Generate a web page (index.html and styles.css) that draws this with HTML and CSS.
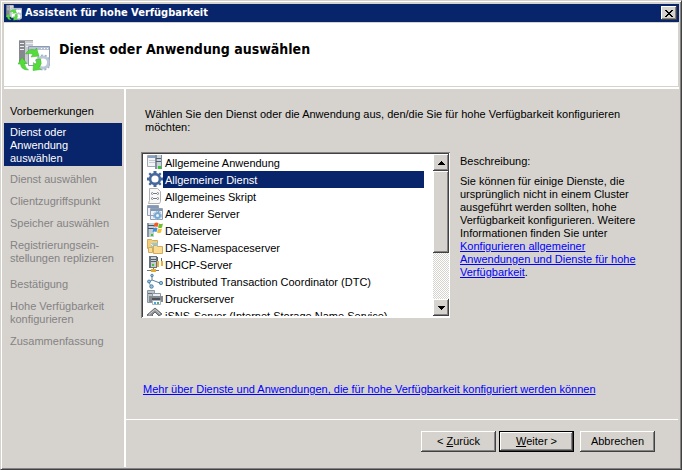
FILE: index.html
```html
<!DOCTYPE html>
<html lang="de">
<head>
<meta charset="utf-8">
<title>Assistent für hohe Verfügbarkeit</title>
<link rel="stylesheet" href="styles.css">
</head>
<body>
<svg class="defs" aria-hidden="true">
  <symbol id="wizard" viewBox="0 0 32 32">
    <path fill="#a9abb0" d="M1 0h14v24H1z"/><path fill="#c9cbd0" d="M7 1h8v23H7z"/><path fill="#85888e" d="M1 1h6v23H1z"/>
    <path stroke="#edeef0" d="M2 3.500h4M2 6.500h4M2 9.500h4M8 3.500h7M8 6.500h7"/>
    <path fill="#fff" stroke="#8f98b3" d="M10.500 6.500h21v19h-21z"/><path fill="#b8c2d5" d="M11 7h20v3H11z"/><path fill="#fff" d="M23 8h1v1h-1zM26 8h1v1h-1zM29 8h1v1h-1z"/>
    <circle cx="25" cy="22.500" r="5.500" fill="#fff" stroke="#bcc8d8" stroke-width="3"/>
    <circle cx="25" cy="22.500" r="7.300" fill="none" stroke="#a3b2c7" stroke-width="1.500" stroke-dasharray="2 2"/>
    <path fill="#55dc3c" stroke="#37b528" stroke-width=".5" d="M7.500 14q3-6 9.500-4l1.500-2 2.500 8-8 1 2-3q-4-1-7.500 0z"/>
    <path fill="#55dc3c" stroke="#37b528" stroke-width=".5" d="M4 17.500l5 6-2.500 0q.5 4 4 6.500Q3 30 2.500 24L0 24z"/>
    <path fill="#55dc3c" stroke="#37b528" stroke-width=".5" d="M18.500 19l4 0q2 5-1.500 8.500l2 2-8 1 .5-8 2 2q2-2 1-5.500z"/>
  </symbol>
  <symbol id="app" viewBox="0 0 16 16">
    <path fill="#f2f5f8" stroke="#a4aab4" d="M.5 1.500h11v11H.5z"/><path fill="#8ba0c0" d="M1 2h10v2H1z"/><path stroke="#c6cbd2" d="M2 6.500h6M2 8.500h6"/>
    <path fill="#82909e" d="M8 1h7v14H8z"/><path fill="#cbd3da" d="M10 1h4v14h-4z"/><path stroke="#52606e" d="M9 4.500h5M9 7.500h5"/><path fill="#35c62f" d="M11 12h3v3h-3z"/>
  </symbol>
  <symbol id="gear" viewBox="0 0 16 16">
    <path fill="#46699b" d="M6.500 0h3v2l2 .8L13 1.500 14.500 3 13.200 4.500l.8 2h2v3h-2l-.8 2 1.300 1.500L13 14.500l-1.500-1.300-2 .8v2h-3v-2l-2-.8L3 14.500 1.500 13l1.300-1.500-.8-2H0v-3h2l.8-2L1.500 3 3 1.500l1.500 1.300 2-.8z"/><circle cx="8" cy="8" r="3.600" fill="#fff"/>
  </symbol>
  <symbol id="script" viewBox="0 0 16 16">
    <path fill="#f8f8f8" stroke="#b0b0b0" d="M2.500.5h8l3 3v10l-1 2h-11l1-3z"/><path fill="none" stroke="#747982" d="M5.500 4q-2 1.500 0 3M10.500 4q2 1.500 0 3M6 5.500h4M5.500 9q-2 1.500 0 3M10.500 9q2 1.500 0 3M6 10.500h4"/>
  </symbol>
  <symbol id="other" viewBox="0 0 16 16">
    <path fill="#eef2f6" stroke="#93a0b3" d="M.5.500h11v10H.5zM3.500 3.500h12v11h-12z"/><path fill="#8197b5" d="M1 1h10v2H1zM4 4h11v2H4z"/>
    <circle cx="10.500" cy="10.500" r="2.500" fill="#eaf4fb" stroke="#78a9d0" stroke-width="2"/><circle cx="10.500" cy="10.500" r="4.200" fill="none" stroke="#8fb4d4" stroke-dasharray="2 1.500"/>
  </symbol>
  <symbol id="file" viewBox="0 0 16 16">
    <path fill="#8695a3" d="M0 1h7v14H0z"/><path fill="#c3ced7" d="M2 1h5v14H2z"/><path stroke="#465664" d="M1 3.500h6M1 6.500h6"/><path fill="#35c62f" d="M4 12h2v2H4z"/>
    <path fill="#ee5b29" d="M7.500 1q2-1 4 0l-1 4q-2-1-4 0z"/><path fill="#74bd35" d="M12 1.500q2 1 4 0l-1 4q-2 1-4 0z"/><path fill="#3d91dc" d="M6.500 6q2-1 4 0l-1 4q-2-1-4 0z"/><path fill="#fbc02d" d="M11 6.500q2 1 4 0l-1 4q-2 1-4 0z"/>
  </symbol>
  <symbol id="dfs" viewBox="0 0 16 16">
    <path fill="#f3ce77" stroke="#d3ab5b" d="M.5.500h4l1 1h5v8H.5z"/><path fill="#8dcbe3" d="M4 4h7v7H4z"/><path stroke="#f5fbff" d="M4 5l6 5"/>
    <path fill="#f9dc91" stroke="#d3ab5b" d="M6.500 6.500h3l1 1h5v7h-9zM1.500 8.500h4v5h-4z"/>
  </symbol>
  <symbol id="dhcp" viewBox="0 0 16 16">
    <path fill="#687580" d="M2 0h8v12H2z"/><path fill="#c6cdd2" d="M4 1h5v10H4z"/><path stroke="#56626b" d="M4 3.500h5M4 5.500h5"/><path fill="#42c733" d="M5 8h2v2H5z"/>
    <path stroke="#eab036" stroke-width="2" d="M11 5v6M15 5v5"/><path stroke="#59636b" d="M10.500 1v4M14.500 2v3"/>
    <path stroke="#70787f" d="M0 14.500h12M6.500 12v3"/><path fill="#e6a92b" d="M4 13h5v3H4z"/>
  </symbol>
  <symbol id="dtc" viewBox="0 0 16 16">
    <path fill="none" stroke="#5b7f9e" d="M5 2v5l8 3M5 7l-3 2"/><path stroke="#879eb0" d="M2 9l2 5"/>
    <g fill="#8dc0e4" stroke="#34658d" stroke-width=".7"><circle cx="5" cy="2.500" r="1.300"/><circle cx="2" cy="8.500" r="1.500"/><circle cx="14" cy="10" r="1.700"/><circle cx="4.500" cy="13.500" r="1.800"/></g>
  </symbol>
  <symbol id="printer" viewBox="0 0 16 16">
    <path fill="#bdc5cb" stroke="#8b97a1" d="M.5.500h7v12h-7z"/><path stroke="#627078" d="M1 3.500h6"/><path fill="#e8eef3" stroke="#8997a2" d="M5.500 3.500h8v4h-8z"/>
    <path fill="#84898f" d="M2 6h14v6H2z"/><path fill="#4c5258" d="M5 8h8v2H5z"/><path fill="#fff" stroke="#a4b4c3" d="M5.500 10.500h8v4h-8z"/><path fill="#55a5d5" d="M7 12h2v2H7z"/><path fill="#52ac8a" d="M10 12h2v2h-2z"/>
  </symbol>
  <symbol id="isns" viewBox="0 0 16 16">
    <path fill="#8d9094" stroke="#66696c" d="M8 1l7 6-3 2-4-4-3 3 3 3-2 4-6-7z"/><path fill="none" stroke="#d0d0d0" d="M2 7.500l6-5 5 4.500"/>
  </symbol>
</svg>
<div class="window">
  <header class="titlebar">
    <svg class="icon16"><use href="#wizard"/></svg>
    <span class="caption">Assistent für hohe Verfügbarkeit</span>
    <button class="close" type="button" aria-label="Schließen"><svg viewBox="0 0 8 7"><path d="M0 0h2v1h1v1h2V1h1V0h2v1H7v1H6v1H5v1h1v1h1v1h1v1H6V6H5V5H3v1H2v1H0V6h1V5h1V4h1V3H2V2H1V1H0z"/></svg></button>
  </header>
  <div class="banner">
    <svg class="icon32"><use href="#wizard"/></svg>
    <h1>Dienst oder Anwendung auswählen</h1>
  </div>
  <div class="body">
    <nav class="steps">
      <ol>
        <li class="done">Vorbemerkungen</li>
        <li class="current" aria-current="step">Dienst oder<br>Anwendung<br>auswählen</li>
        <li>Dienst auswählen</li>
        <li>Clientzugriffspunkt</li>
        <li>Speicher auswählen</li>
        <li class="replicate">Registrierungsein-<br>stellungen replizieren</li>
        <li>Bestätigung</li>
        <li>Hohe Verfügbarkeit<br>konfigurieren</li>
        <li>Zusammenfassung</li>
      </ol>
    </nav>
    <div class="page">
      <main>
        <p class="intro" id="intro">Wählen Sie den Dienst oder die Anwendung aus, den/die Sie für hohe Verfügbarkeit konfigurieren<br>möchten:</p>
        <div class="chooser">
          <div class="listbox">
            <ul role="listbox" aria-labelledby="intro" tabindex="0">
              <li role="option"><svg class="icon16"><use href="#app"/></svg><span>Allgemeine Anwendung</span></li>
              <li role="option" aria-selected="true"><svg class="icon16"><use href="#gear"/></svg><span>Allgemeiner Dienst</span></li>
              <li role="option"><svg class="icon16"><use href="#script"/></svg><span>Allgemeines Skript</span></li>
              <li role="option"><svg class="icon16"><use href="#other"/></svg><span>Anderer Server</span></li>
              <li role="option"><svg class="icon16"><use href="#file"/></svg><span>Dateiserver</span></li>
              <li role="option"><svg class="icon16"><use href="#dfs"/></svg><span>DFS-Namespaceserver</span></li>
              <li role="option"><svg class="icon16"><use href="#dhcp"/></svg><span>DHCP-Server</span></li>
              <li role="option"><svg class="icon16"><use href="#dtc"/></svg><span>Distributed Transaction Coordinator (DTC)</span></li>
              <li role="option"><svg class="icon16"><use href="#printer"/></svg><span>Druckerserver</span></li>
              <li role="option"><svg class="icon16"><use href="#isns"/></svg><span>iSNS-Server (Internet Storage Name Service)</span></li>
            </ul>
            <div class="scrollbar">
              <button type="button" aria-label="Nach oben"><svg viewBox="0 0 7 4"><path d="M3 0h1v1h1v1h1v1h1v1H0V3h1V2h1V1h1z"/></svg></button>
              <div class="thumb"></div>
              <div class="track"></div>
              <button type="button" aria-label="Nach unten"><svg viewBox="0 0 7 4"><path d="M0 0h7v1H6v1H5v1H4v1H3V3H2V2H1V1H0z"/></svg></button>
            </div>
          </div>
          <section class="description">
            <h2>Beschreibung:</h2>
            <p>Sie können für einige Dienste, die<br>ursprünglich nicht in einem Cluster<br>ausgeführt werden sollten, hohe<br>Verfügbarkeit konfigurieren. Weitere<br>Informationen finden Sie unter<br><a href="#konfigurieren">Konfigurieren allgemeiner<br>Anwendungen und Dienste für hohe<br>Verfügbarkeit</a>.</p>
          </section>
        </div>
        <a class="more" href="#mehr">Mehr über Dienste und Anwendungen, die für hohe Verfügbarkeit konfiguriert werden können</a>
      </main>
      <footer>
        <button class="push" type="button">&lt; <u>Z</u>urück</button>
        <button class="push default" type="button"><u>W</u>eiter &gt;</button>
        <button class="push cancel" type="button">Abbrechen</button>
      </footer>
    </div>
  </div>
</div>
</body>
</html>
```
FILE: styles.css
```css
:root {
  --face: #d6d3ce;
  --navy: #08246b;
  --shadow: #848284;
  --dark: #424142;
}
* { box-sizing: border-box; }
body {
  margin: 0;
  background: var(--face);
  color: #000;
  font: 11px/13px "Liberation Sans", Arial, sans-serif;
}
h1, h2, p, ul, ol { margin: 0; padding: 0; font: inherit; }
ul, ol { list-style: none; }
button { font: inherit; color: inherit; padding: 0; border: 0; border-radius: 0; background: var(--face); }
svg { display: block; flex: none; }
a { color: #00f; }
.defs { position: absolute; width: 0; height: 0; }
.icon16 { width: 16px; height: 16px; }
.icon32 { width: 32px; height: 32px; }

.window {
  display: flex;
  flex-direction: column;
  min-height: 100vh;
  padding: 3px 2px 2px 3px;
  border: 1px solid;
  border-color: var(--face) var(--dark) var(--dark) var(--face);
  box-shadow: inset 1px 1px #fff, inset -1px -1px var(--shadow);
}
.titlebar {
  display: flex;
  align-items: center;
  height: 18px;
  padding: 0 2px;
  gap: 3px;
  background: var(--navy);
  color: #fff;
}
.caption { flex: 1; font: bold 11px/18px "DejaVu Sans Condensed", Tahoma, sans-serif; }
.close { display: grid; place-items: center; width: 16px; height: 14px; }
.close svg { width: 8px; height: 7px; }
.close, .scrollbar button, .thumb {
  background: var(--face);
  box-shadow: inset -1px -1px var(--dark), inset 1px 1px #fff, inset -2px -2px var(--shadow);
}
.banner {
  display: flex;
  gap: 9px;
  height: 65px;
  margin-right: 1px;
  padding: 17px 14px;
  border: solid var(--face);
  border-width: 1px 0;
  background: #fff;
}
h1 { font: bold 14px/18px "DejaVu Sans Condensed", Verdana, sans-serif; }
.body {
  display: flex;
  flex: 1;
  border-top: 2px solid #fff;
}
.steps {
  flex: none;
  width: 122px;
  padding-top: 12px;
  padding-right: 2px;
  border-right: 2px solid #fff;
  color: var(--shadow);
}
.steps ol { display: flex; flex-direction: column; gap: 5px; }
.steps li { padding: 2px 6px; }
.steps .done { padding: 4px 6px 0; color: #000; }
.steps .current { padding: 3px 6px 1px; background: var(--navy); color: #fff; }
.steps .replicate { margin-bottom: 4px; }

.page { flex: 1; min-width: 0; display: flex; flex-direction: column; }
main { flex: 1; padding: 19px 16px 0 17px; }
.intro { padding-left: 2px; }
.chooser { display: flex; gap: 10px; margin-top: 18px; }
.listbox {
  display: flex;
  flex: none;
  width: 309px;
  height: 166px;
  padding: 2px 1px 2px 2px;
  background: #fff;
  margin-left: -2px;
  box-shadow: inset 1px 1px var(--shadow), inset -1px -1px #fff, inset 2px 2px var(--dark);
}
.listbox ul { flex: 1; overflow: hidden; padding: 0 9px 0 4px; outline: 0; }
.listbox li { display: flex; height: 17px; }
.listbox li span { flex: 1; padding: 1px 0 0 2px; line-height: 17px; white-space: nowrap; }
.listbox [aria-selected] span { background: var(--navy); color: #fff; }
.scrollbar { display: flex; flex-direction: column; width: 16px; }
.scrollbar button { display: grid; place-items: center; height: 17px; }
.scrollbar svg { width: 7px; height: 4px; }
.thumb { flex: 82; }
.track { flex: 46; background: repeating-conic-gradient(#fff 0 25%, var(--face) 0 50%) 0 0 / 2px 2px; }
.description { padding-top: 3px; }
.description p { margin-top: 7px; }
.more { display: inline-block; margin-top: 65px; }

footer {
  display: flex;
  gap: 3px;
  justify-content: flex-end;
  height: 48px;
  margin-right: 1px;
  padding: 11px 23px 0 0;
  border-top: 1px solid #fff;
}
.push {
  width: 75px;
  height: 21px;
  box-shadow: inset -1px -1px var(--dark), inset 1px 1px #fff, inset -2px -2px var(--shadow);
}
.push.default {
  border: 1px solid #000;
}
.push.cancel { margin-left: 3px; }
```
